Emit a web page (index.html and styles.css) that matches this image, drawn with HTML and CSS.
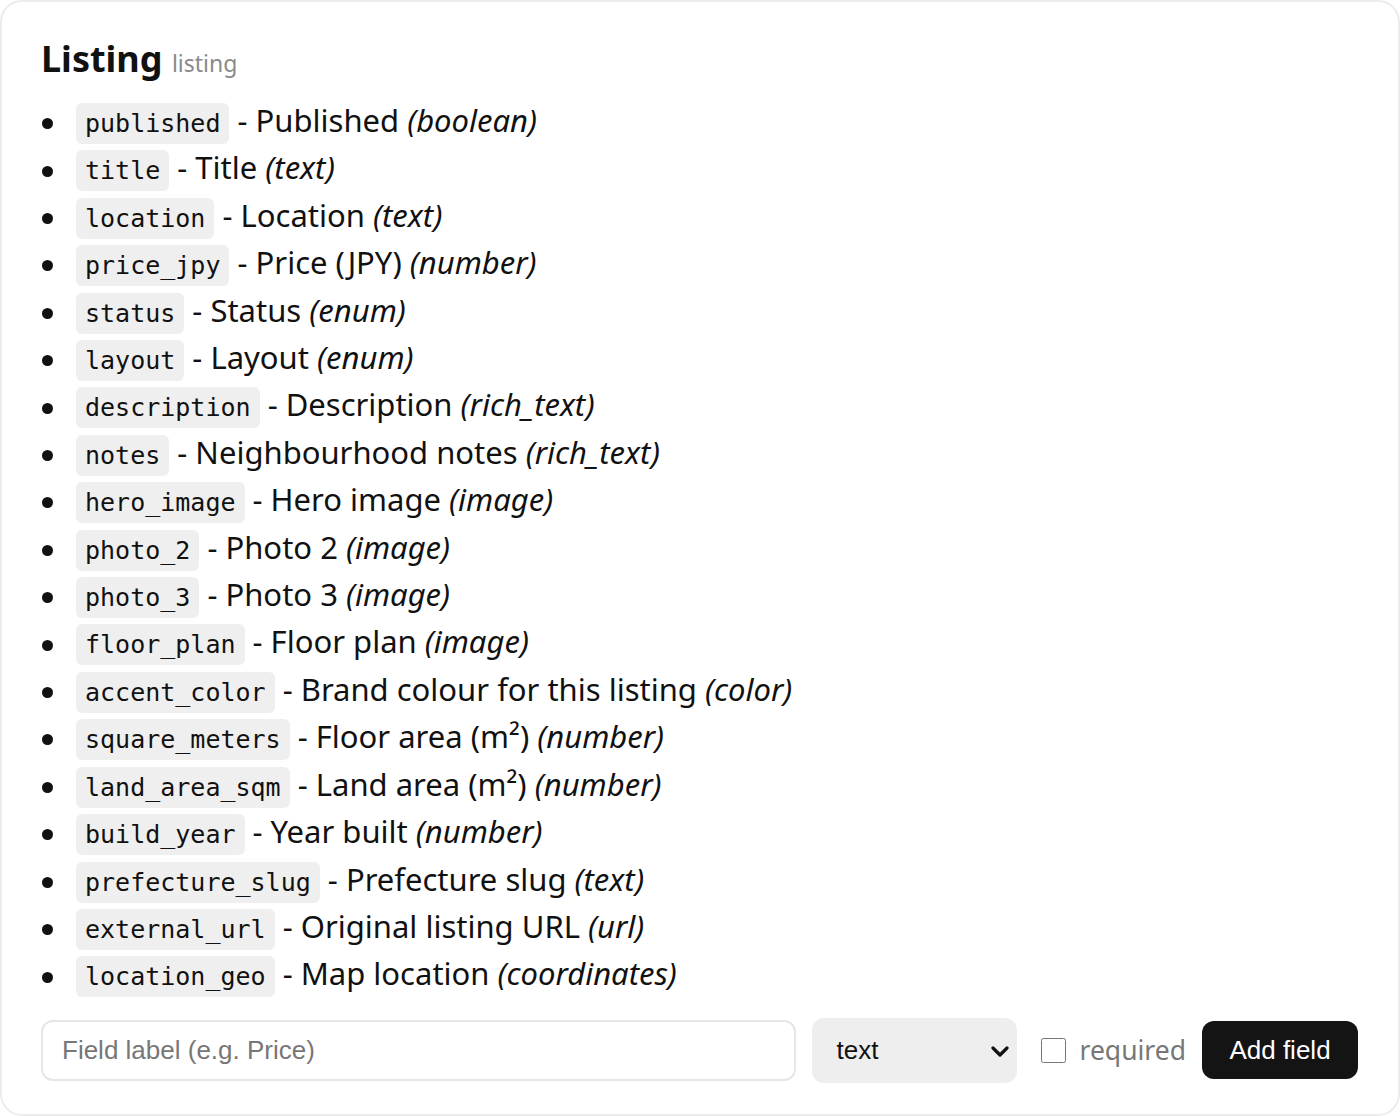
FILE: index.html
```html
<!DOCTYPE html>
<html lang="en">
<head>
    <meta charset="UTF-8">
    <meta name="viewport" content="width=device-width, initial-scale=1.0">
    <title>Listing schema</title>
    <link rel="stylesheet" href="styles.css">
</head>
<body>

    <div class="card">
        <h2 class="model-title">Listing <span class="model-key">listing</span></h2>

        <ul class="field-list">
            <li><code>published</code> - Published <em>(boolean)</em></li>
            <li><code>title</code> - Title <em>(text)</em></li>
            <li><code>location</code> - Location <em>(text)</em></li>
            <li><code>price_jpy</code> - Price (JPY) <em>(number)</em></li>
            <li><code>status</code> - Status <em>(enum)</em></li>
            <li><code>layout</code> - Layout <em>(enum)</em></li>
            <li><code>description</code> - Description <em>(rich_text)</em></li>
            <li><code>notes</code> - Neighbourhood notes <em>(rich_text)</em></li>
            <li><code>hero_image</code> - Hero image <em>(image)</em></li>
            <li><code>photo_2</code> - Photo 2 <em>(image)</em></li>
            <li><code>photo_3</code> - Photo 3 <em>(image)</em></li>
            <li><code>floor_plan</code> - Floor plan <em>(image)</em></li>
            <li><code>accent_color</code> - Brand colour for this listing <em>(color)</em></li>
            <li><code>square_meters</code> - Floor area (m²) <em>(number)</em></li>
            <li><code>land_area_sqm</code> - Land area (m²) <em>(number)</em></li>
            <li><code>build_year</code> - Year built <em>(number)</em></li>
            <li><code>prefecture_slug</code> - Prefecture slug <em>(text)</em></li>
            <li><code>external_url</code> - Original listing URL <em>(url)</em></li>
            <li><code>location_geo</code> - Map location <em>(coordinates)</em></li>
        </ul>

        <form class="add-form" onsubmit="return false;">
            <input type="text" class="label-input" placeholder="Field label (e.g. Price)">
            <div class="select-wrap">
                <select class="type-select">
                    <option>text</option>
                    <option>rich_text</option>
                    <option>number</option>
                    <option>boolean</option>
                    <option>enum</option>
                    <option>image</option>
                    <option>color</option>
                    <option>url</option>
                    <option>coordinates</option>
                </select>
                <svg class="chevron" width="18" height="12" viewBox="0 0 18 12">
                    <path d="M2 2 L9 9 L16 2" fill="none" stroke="#111" stroke-width="3.2" stroke-linecap="round" stroke-linejoin="round"/>
                </svg>
            </div>
            <label class="required-label"><input type="checkbox"> required</label>
            <button type="submit" class="add-btn">Add field</button>
        </form>
    </div>

</body>
</html>
```

FILE: styles.css
```css
body {
    margin: 0;
    font-family: "Noto Sans", sans-serif;
    background-color: #ffffff;
    color: #111111;
}

.card {
    box-sizing: border-box;
    width: 1400px;
    height: 1116px;
    border: 2px solid #ececec;
    border-radius: 22px;
    padding: 30px 40px 0 39px;
}

.model-title {
    margin: 0 0 7px 0;
    font-size: 36px;
    font-weight: 700;
    line-height: 54px;
}

.model-key {
    font-size: 23px;
    font-weight: 400;
    color: #8a8a8a;
}

.field-list {
    margin: 0;
    padding-left: 35px;
    list-style: none;
    font-size: 31px;
    line-height: 47.4px;
}

.field-list li::before {
    content: "";
    display: inline-block;
    width: 11px;
    height: 11px;
    border-radius: 50%;
    background-color: #111111;
    margin-left: -34px;
    margin-right: 23px;
    vertical-align: middle;
}

.field-list em {
    font-style: italic;
}

code {
    font-family: "DejaVu Sans Mono", monospace;
    font-size: 25px;
    line-height: 1;
    background-color: #efefef;
    padding: 6px 9px;
    border-radius: 6px;
}

.add-form {
    display: flex;
    align-items: center;
    gap: 16px;
    margin-top: 20px;
}

.label-input {
    flex: 1;
    height: 61px;
    box-sizing: border-box;
    border: 2px solid #e6e6e6;
    border-radius: 12px;
    padding: 0 19px;
    font-family: "Liberation Sans", Arial, sans-serif;
    font-size: 26px;
    color: #111;
}

.label-input::placeholder {
    color: #777777;
}

.select-wrap {
    position: relative;
    width: 205px;
    height: 65px;
}

.type-select {
    appearance: none;
    -webkit-appearance: none;
    width: 100%;
    height: 100%;
    border: none;
    border-radius: 12px;
    background-color: #eeeeee;
    padding: 0 24px;
    font-family: "Liberation Sans", Arial, sans-serif;
    font-size: 26px;
    color: #111;
}

.chevron {
    position: absolute;
    right: 8px;
    top: 28px;
    pointer-events: none;
}

.required-label {
    display: flex;
    align-items: center;
    gap: 13px;
    margin-left: 8px;
    font-size: 26.5px;
    color: #777777;
}

.required-label input {
    width: 25px;
    height: 25px;
    margin: 0;
}

.add-btn {
    height: 58px;
    width: 156px;
    padding: 0;
    background-color: #141414;
    color: #ffffff;
    border: none;
    border-radius: 12px;
    font-family: "Liberation Sans", Arial, sans-serif;
    font-size: 26px;
    cursor: pointer;
}
```
